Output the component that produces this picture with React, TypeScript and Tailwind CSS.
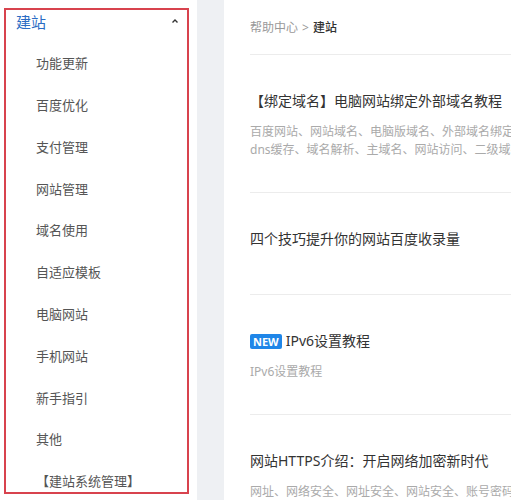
import React from "react";

const menuItems = [
  "功能更新",
  "百度优化",
  "支付管理",
  "网站管理",
  "域名使用",
  "自适应模板",
  "电脑网站",
  "手机网站",
  "新手指引",
  "其他",
  "【建站系统管理】",
];

const articles = [
  {
    id: 1,
    title: "【绑定域名】电脑网站绑定外部域名教程",
    desc: [
      "百度网站、网站域名、电脑版域名、外部域名绑定、网站设置",
      "dns缓存、域名解析、主域名、网站访问、二级域名",
    ],
  },
  { id: 2, title: "四个技巧提升你的网站百度收录量", desc: [] },
  { id: 3, title: "IPv6设置教程", desc: ["IPv6设置教程"], isNew: true },
  {
    id: 4,
    title: "网站HTTPS介绍：开启网络加密新时代",
    desc: ["网址、网络安全、网址安全、网站安全、账号密码"],
  },
];

const App = () => {
  return (
    <div
      className="flex w-[511px] h-[500px] overflow-hidden bg-white"
      style={{ fontFamily: '"Noto Sans", "Noto Sans CJK SC", sans-serif' }}
    >
      {/* sidebar */}
      <div className="w-[197px] shrink-0 pl-[4px] pt-[8px]">
        <div className="w-[185px] h-[486px] border-2 border-[#d8434e] overflow-hidden">
          <div className="flex items-center justify-between h-[24px] pl-[10px] pr-[8px]">
            <span className="text-[15px] leading-[24px] text-[#2a6cc4]">建站</span>
            <svg width="8" height="6" viewBox="0 0 8 6" className="mt-[-2px]">
              <polyline
                points="1.5,4.5 4,2 6.5,4.5"
                fill="none"
                stroke="#333"
                strokeWidth="1.4"
              />
            </svg>
          </div>
          <ul className="pt-[9px]">
            {menuItems.map((item) => (
              <li
                key={item}
                className="h-[41.8px] flex items-center pl-[30px] text-[13px] text-[#555]"
              >
                {item}
              </li>
            ))}
          </ul>
        </div>
      </div>

      {/* gutter */}
      <div className="w-[27px] shrink-0 bg-[#eef0f3]" />

      {/* content */}
      <div className="flex-1 min-w-0 pl-[26px]">
        <div className="pt-[18px] pb-[16px] border-b border-[#ececec] text-[12px] leading-[20px]">
          <span className="text-[#999]">帮助中心</span>
          <span className="text-[#999] mx-[4px]">&gt;</span>
          <span className="text-[#333] font-medium">建站</span>
        </div>
        {articles.map((a) => (
          <div key={a.id} className="pt-[35px] pb-[33px] border-b border-[#ececec]">
            <div className="flex items-center h-[22px] whitespace-nowrap">
              {a.isNew && (
                <span className="mr-[4px] h-[15px] px-[3px] rounded-[2px] bg-[#1f86e8] text-white text-[11px] font-bold leading-[15px]">
                  NEW
                </span>
              )}
              <span className="text-[14px] leading-[22px] text-[#333]">{a.title}</span>
            </div>
            <div className="mt-[11px]">
              {a.desc.map((line) => (
                <p
                  key={line}
                  className="text-[12px] leading-[18px] text-[#aaa] whitespace-nowrap"
                >
                  {line}
                </p>
              ))}
            </div>
          </div>
        ))}
      </div>
    </div>
  );
};

export default App;
